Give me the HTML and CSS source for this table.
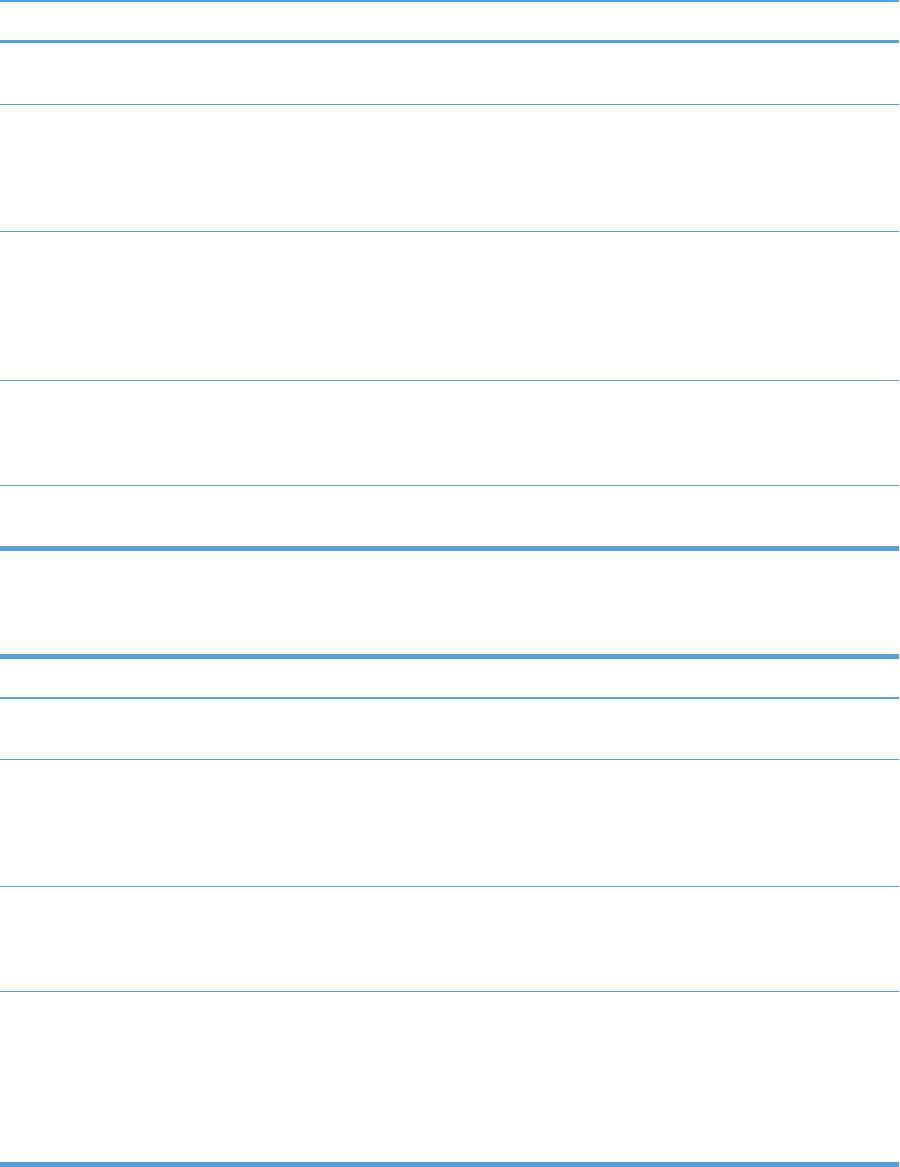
FILE: index.html
```html
<!DOCTYPE html>
<html>
<head>
<meta charset="utf-8">
<link rel="stylesheet" href="styles.css">
</head>
<body>
<div class="page">
  <div class="tbl tbl-first">
    <div class="row head"></div>
    <div class="row r61"></div>
    <div class="row r126"></div>
    <div class="row r148"></div>
    <div class="row r104"></div>
    <div class="row r60 last"></div>
  </div>
  <div class="spacer"></div>
  <div class="tbl tbl-second">
    <div class="row head2"></div>
    <div class="row r60"></div>
    <div class="row r126"></div>
    <div class="row r104"></div>
    <div class="row r170 last"></div>
  </div>
</div>
</body>
</html>
```
FILE: styles.css
```css
html, body {
  margin: 0;
  padding: 0;
  background: #ffffff;
  font-family: "Liberation Sans", Arial, sans-serif;
}
.page {
  width: 899px;
  display: flex;
  flex-direction: column;
}
.tbl {
  display: flex;
  flex-direction: column;
  border-bottom: 5px solid #58a0d4;
}
.tbl-first {
  border-top: 2px solid #58a0d4;
}
.tbl-second {
  border-top: 5px solid #58a0d4;
}
.row {
  border-bottom: 1px solid #58a0d4;
}
.row.last {
  border-bottom: none;
}
.head {
  height: 38px;
  border-bottom: 3px solid #58a0d4;
}
.head2 {
  height: 38px;
  border-bottom: 2px solid #58a0d4;
}
.r60 { height: 60px; }
.r61 { height: 61px; }
.r104 { height: 104px; }
.r126 { height: 126px; }
.r148 { height: 148px; }
.r170 { height: 170px; }
.spacer { height: 103px; }
```
